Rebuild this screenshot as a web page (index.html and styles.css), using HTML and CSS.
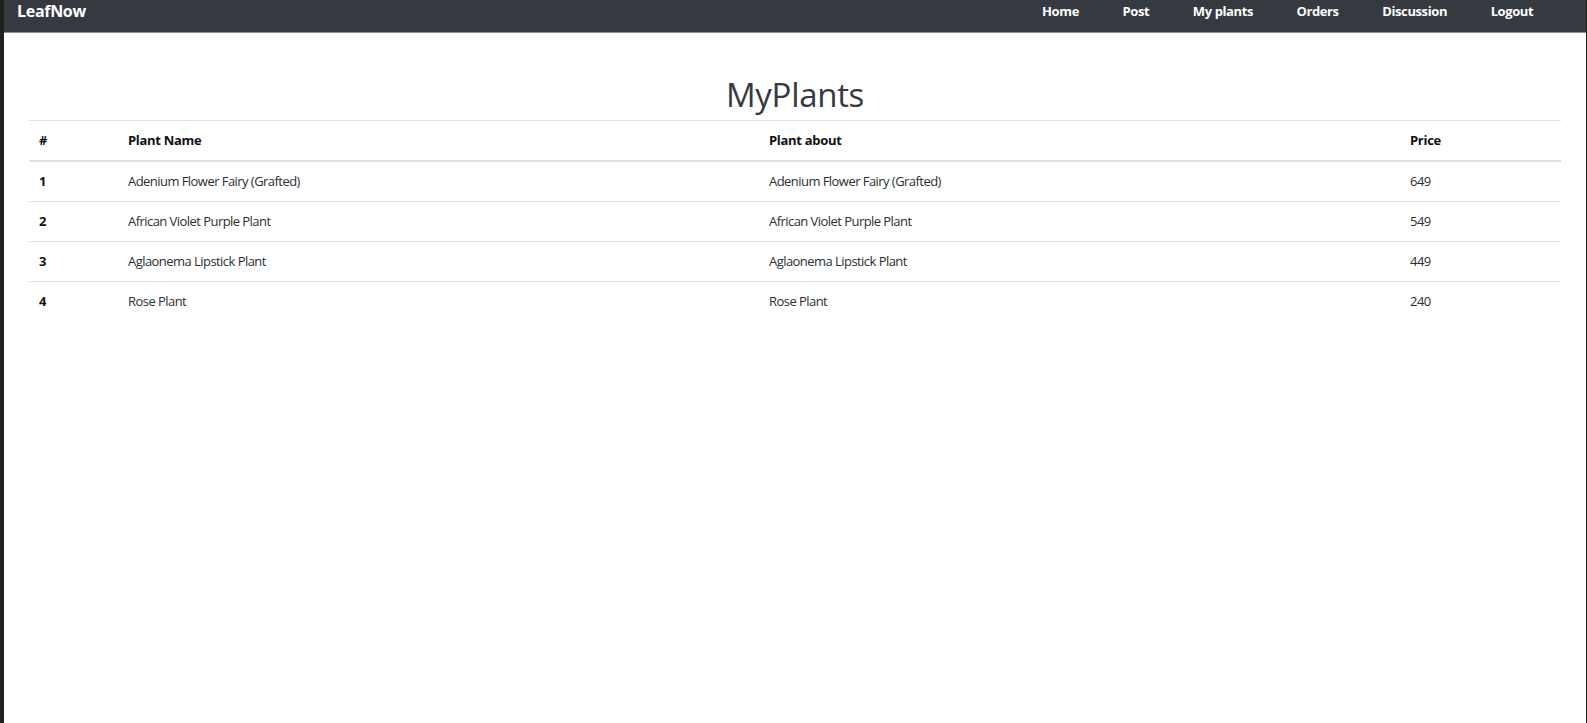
FILE: index.html
```html
<!DOCTYPE html>
<html lang="en">
<head>
<meta charset="utf-8">
<title>LeafNow - MyPlants</title>
<link rel="stylesheet" href="styles.css">
</head>
<body>
<div class="frame">
  <nav class="navbar">
    <a class="brand" href="#">LeafNow</a>
    <ul class="nav-links">
      <li><a href="#">Home</a></li>
      <li><a href="#">Post</a></li>
      <li><a href="#">My plants</a></li>
      <li><a href="#">Orders</a></li>
      <li><a href="#">Discussion</a></li>
      <li><a href="#">Logout</a></li>
    </ul>
  </nav>
  <main class="content">
    <h1 class="title">MyPlants</h1>
    <table class="plants">
      <colgroup>
        <col class="c-num"><col class="c-name"><col class="c-about"><col class="c-price">
      </colgroup>
      <thead>
        <tr><th>#</th><th>Plant Name</th><th>Plant about</th><th>Price</th></tr>
      </thead>
      <tbody>
        <tr><th>1</th><td>Adenium Flower Fairy (Grafted)</td><td>Adenium Flower Fairy (Grafted)</td><td>649</td></tr>
        <tr><th>2</th><td>African Violet Purple Plant</td><td>African Violet Purple Plant</td><td>549</td></tr>
        <tr><th>3</th><td>Aglaonema Lipstick Plant</td><td>Aglaonema Lipstick Plant</td><td>449</td></tr>
        <tr><th>4</th><td>Rose Plant</td><td>Rose Plant</td><td>240</td></tr>
      </tbody>
    </table>
  </main>
</div>
</body>
</html>
```

FILE: styles.css
```css
html, body {
  margin: 0;
  padding: 0;
  height: 100%;
}
body {
  background: #202020;
  font-family: "Open Sans", "Noto Sans", sans-serif;
  color: #212529;
}
.frame {
  margin-left: 4px;
  margin-right: 1px;
  min-height: 100%;
  background: #ffffff;
  display: flex;
  flex-direction: column;
}
.navbar {
  background: #343a40;
  height: 32px;
  border-bottom: 1px solid #8a8d90;
  display: flex;
  align-items: flex-start;
  justify-content: space-between;
  padding: 0 0 0 13px;
}
.brand {
  color: #ffffff;
  font-weight: 700;
  font-size: 16px;
  line-height: normal;
  text-decoration: none;
  letter-spacing: -0.3px;
}
.nav-links {
  list-style: none;
  display: flex;
  margin: 0;
  padding: 2px 31px 0 0;
}
.nav-links a {
  display: block;
  padding: 0 21.8px;
  color: #ffffff;
  font-weight: 700;
  font-size: 13px;
  line-height: normal;
  text-decoration: none;
  letter-spacing: -0.4px;
}
.content {
  padding: 0 25px;
}
.title {
  margin: 42px 0 0;
  text-align: center;
  font-size: 33px;
  font-weight: 500;
  line-height: 1.2;
  color: #343a40;
  letter-spacing: -0.3px;
}
.plants {
  width: 100%;
  border-collapse: collapse;
  table-layout: fixed;
  font-size: 13px;
  margin-top: 5px;
}
.c-num { width: 89px; }
.c-name { width: 641px; }
.c-about { width: 641px; }
.c-price { width: 161px; }
.plants th, .plants td {
  text-align: left;
  padding: 9px 10px;
  line-height: 21px;
  border-top: 1px solid #dee2e6;
}
.plants th {
  font-weight: 700;
  color: #111;
  letter-spacing: -0.3px;
}
.plants td {
  color: #2b2f33;
  letter-spacing: -0.55px;
}
.plants thead th {
  border-bottom: 2px solid #dee2e6;
}
.plants tbody tr:first-child th,
.plants tbody tr:first-child td {
  border-top: 0;
}
```
